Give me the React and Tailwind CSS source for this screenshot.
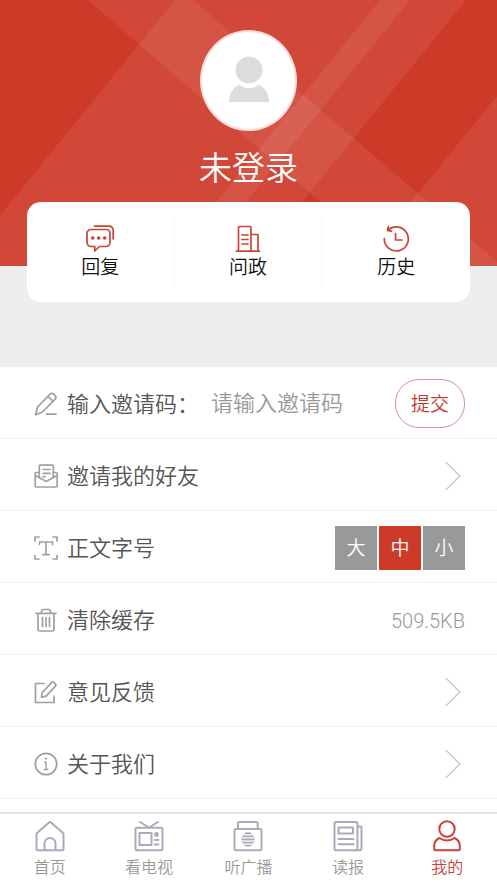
import React, { useState } from "react";

const Icon = ({ className, children, width = 24, height = 24, strokeWidth = 1.7 }) => (
    <svg
        className={className}
        width={width}
        height={height}
        viewBox={`0 0 ${width} ${height}`}
        fill="none"
        stroke="currentColor"
        strokeWidth={strokeWidth}
        strokeLinecap="round"
        strokeLinejoin="round"
        aria-hidden="true"
    >
        {children}
    </svg>
);

/* shortcut icons */
const ReplyIcon = () => (
    <Icon width={28} height={28}>
        <path d="M5 4.500h15a4 4 0 0 1 4 4v9a4 4 0 0 1-4 4h-6.500l-4.700 4.500v-4.500H5a4 4 0 0 1-4-4v-9a4 4 0 0 1 4-4z" />
        <path d="M8.500 1.200h14.700a4 4 0 0 1 4 4V14" />
        <g fill="currentColor" stroke="none">
            <circle cx="6.700" cy="13" r="1.800" />
            <circle cx="12.700" cy="13" r="1.800" />
            <circle cx="18.700" cy="13" r="1.800" />
        </g>
    </Icon>
);

const BuildingIcon = () => (
    <Icon width={28} height={28}>
        <path d="M2.500 26.200h23M4.500 26V2.500a1 1 0 0 1 1-1h10.500a1 1 0 0 1 1 1V26M17 9.500h6.500a.5.500 0 0 1 .5.500v16M8 10h6M8 14.500h6M8 19h6" />
    </Icon>
);

const HistoryIcon = () => (
    <Icon width={28} height={28}>
        <path d="M2.300 13.500a12 12 0 1 0 4-8.500" />
        <path d="M6.300 1.500 5.500 5.500l4 .7" />
        <path d="M13.500 8.500V15H20" />
    </Icon>
);

/* list icons */
const PencilIcon = () => (
    <Icon>
        <path d="M1.500 22.800 3.600 15 16 2.200a2.500 2.500 0 0 1 3.600 0l1.500 1.500a2.500 2.500 0 0 1 0 3.500L8.500 20zM14 4.300l5.200 5M12.500 22.200h9.500" />
    </Icon>
);

const InviteIcon = () => (
    <Icon>
        <path d="M5.300 13.500V2a.8.800 0 0 1 .8-.8h12.400a.8.800 0 0 1 .8.800v11.500M9 5.500h7M9 9.300h7M9 12.700h2" />
        <path d="M5.300 8.500H2.200a1 1 0 0 0-1 1V22a1 1 0 0 0 1 1h20a1 1 0 0 0 1-1V9.500a1 1 0 0 0-1-1h-2.900M1.500 11.500l10.700 6 10.800-6" />
    </Icon>
);

const TextSizeIcon = () => (
    <Icon>
        <path d="M1 5V1h4M19 1h4v4M1 19.500V23h4M19 23h4v-3.500" />
        <path d="M5.500 8.500V6h13v2.500M12 6v12.500M9 18.700h6" />
    </Icon>
);

const TrashIcon = () => (
    <Icon>
        <path d="M2 5.300h20M4 5.500v16A1.500 1.500 0 0 0 5.500 23h13a1.500 1.500 0 0 0 1.500-1.500v-16M7.500 5V3A1.500 1.500 0 0 1 9 1.500h6A1.500 1.500 0 0 1 16.500 3v2M8.500 9.500v9M12 9.500v9M15.500 9.500v9" />
    </Icon>
);

const FeedbackIcon = () => (
    <Icon>
        <path d="M10 3.500H1.500v19H20V16" />
        <path d="m7.500 17.200.7-4.500L18 2.200a1 1 0 0 1 1.400 0l2.300 2.200a1 1 0 0 1 0 1.400L12 16.200z" />
    </Icon>
);

const InfoIcon = () => (
    <Icon>
        <circle cx="12" cy="12" r="10.700" />
        <path d="M10.700 10H12v7.500M10.200 17.500h3.600" strokeWidth="1.400" />
        <circle cx="12" cy="6.700" r="1.100" fill="currentColor" stroke="none" />
    </Icon>
);

const ChevronIcon = () => (
    <svg width="16" height="30" viewBox="0 0 16 30" fill="none" stroke="#ccc" strokeWidth="1.500" aria-hidden="true">
        <path d="m.8 1 14 14-14 14" />
    </svg>
);

/* tab bar icons */
const HomeIcon = () => (
    <Icon width={32} height={32} strokeWidth={2}>
        <path d="M2.500 13.500 15.300 2.300a1 1 0 0 1 1.400 0L29.500 13.500V29a1.200 1.200 0 0 1-1.200 1.200H3.700A1.200 1.200 0 0 1 2.500 29z" />
        <path d="M10.500 30v-6.500a5.500 5.500 0 0 1 11 0V30" />
    </Icon>
);

const TvIcon = () => (
    <Icon width={32} height={32} strokeWidth={2}>
        <path d="m7 2 9 5.500L25 2" />
        <rect x="2.500" y="7.700" width="27" height="22.500" rx="1.500" />
        <rect x="6.500" y="13" width="12" height="12" />
        <circle cx="23.500" cy="14.500" r="2.400" fill="currentColor" stroke="none" />
        <path d="M21.800 20h3.500M21.800 24.500h3.500" />
    </Icon>
);

const RadioIcon = () => (
    <Icon width={32} height={32} strokeWidth={2}>
        <rect x="2.500" y="9" width="27" height="21.200" rx="1.500" />
        <path d="M6 9V3.500A1.500 1.500 0 0 1 7.500 2h16.700a1.500 1.500 0 0 1 1.500 1.500V9" />
        <circle cx="16" cy="19.500" r="7" fill="currentColor" fillOpacity="0.3" stroke="none" />
        <path d="M13.500 13.300h5M11 16.400h10M10 19.500h12M11 22.600h10M13.500 25.700h5" strokeWidth="1.400" />
    </Icon>
);

const NewspaperIcon = () => (
    <Icon width={32} height={32} strokeWidth={2}>
        <rect x="2.500" y="2" width="23" height="28.200" rx="1.500" />
        <path d="M25.500 6.500h3a1 1 0 0 1 1 1v21a1.700 1.700 0 0 1-1.700 1.700H23" />
        <rect x="6.500" y="7.500" width="14.500" height="6" />
        <path d="M6.500 19h15M6.500 24.300h15" />
    </Icon>
);

const UserIcon = () => (
    <Icon width={32} height={32} strokeWidth={2}>
        <circle cx="16" cy="9" r="7.700" />
        <path d="M8.500 18c-3.500 1.500-5.300 4.200-5.300 8v3a1.200 1.200 0 0 0 1.200 1.200h23.200a1.200 1.200 0 0 0 1.200-1.200v-3c0-3.800-1.800-6.500-5.300-8-4.300 3.200-10.700 3.200-15 0z" />
    </Icon>
);

const shortcuts = [
    { label: "回复", icon: ReplyIcon },
    { label: "问政", icon: BuildingIcon },
    { label: "历史", icon: HistoryIcon },
];

const tabs = [
    { label: "首页", icon: HomeIcon },
    { label: "看电视", icon: TvIcon },
    { label: "听广播", icon: RadioIcon },
    { label: "读报", icon: NewspaperIcon },
    { label: "我的", icon: UserIcon, active: true },
];

const rowClass = "flex h-[72px] w-full items-center border-b border-[#f3f3f3] pl-[34px] pr-8 pt-0.5 text-left";

const RowLabel = ({ icon: RowIcon, children }) => (
    <span className="flex shrink-0 items-center gap-[9px] whitespace-nowrap">
        <span className="text-[#a0a0a0]">
            <RowIcon />
        </span>
        <span className="pt-0.5">{children}</span>
    </span>
);

const LinkRow = ({ icon, label }) => (
    <a href="#" className={rowClass}>
        <RowLabel icon={icon}>{label}</RowLabel>
        <span className="ml-auto mr-1">
            <ChevronIcon />
        </span>
    </a>
);

const ProfileHeader = () => (
    <header className="relative bg-[#eee] px-[27px] pb-[65px] pt-[30px]">
        <svg
            className="absolute inset-x-0 top-0 h-[266px] w-full bg-[#ce3a28]"
            viewBox="0 0 497 266"
            preserveAspectRatio="none"
            fill="#fff"
            fillOpacity="0.075"
            aria-hidden="true"
        >
            <path d="M88 0h105l309 266H394z" />
            <path d="M175 0h235L194 266H-41z" />
            <path d="M380 0h86L250 266h-86z" />
            <path d="M497 96v170H359z" />
        </svg>

        <div className="relative flex flex-col items-center">
            <div className="flex h-[101px] w-[97px] items-center justify-center rounded-[50%] border-2 border-[#f9dcd8] bg-white pb-1">
                <svg width="40" height="46" viewBox="0 0 40 46" fill="#dcdcdc" aria-hidden="true">
                    <circle cx="20" cy="14" r="13.500" />
                    <path d="M0 46c.5-8 3.500-14 10-17.500 6 5 14 5 20 0C36.500 32 39.500 38 40 46z" />
                </svg>
            </div>
            <h1 className="mt-3.5 text-[33px] leading-[48px] text-white">未登录</h1>
        </div>

        <nav className="relative mt-[9px] grid h-[100px] grid-cols-3 rounded-[14px] bg-white py-3.5">
            {shortcuts.map(({ label, icon: ShortcutIcon }) => (
                <a
                    key={label}
                    href="#"
                    className="flex flex-col items-center gap-px border-r border-[#f7f7f7] pt-[9px] text-[19px] leading-7 text-[#111] last:border-r-0"
                >
                    <span className="text-[#cb4236]">
                        <ShortcutIcon />
                    </span>
                    {label}
                </a>
            ))}
        </nav>
    </header>
);

const FontSizePicker = () => {
    const [size, setSize] = useState("中");

    return (
        <div className="ml-auto flex gap-0.5">
            {["大", "中", "小"].map((item) => (
                <button
                    key={item}
                    type="button"
                    aria-pressed={size === item}
                    onClick={() => setSize(item)}
                    className={`h-11 w-[42px] pt-0.5 text-[19px] text-white ${size === item ? "bg-[#ce3a28]" : "bg-[#999]"}`}
                >
                    {item}
                </button>
            ))}
        </div>
    );
};

const TabBar = () => (
    <nav className="sticky bottom-0 mt-auto grid h-[71px] grid-cols-5 border-t-2 border-[#e2e2e2] bg-white pt-1.5">
        {tabs.map(({ label, icon: TabIcon, active }) => (
            <a
                key={label}
                href="#"
                aria-current={active ? "page" : undefined}
                className={`flex flex-col items-center gap-1 text-base leading-6 ${active ? "text-[#cb4236]" : "text-[#999]"}`}
            >
                <span className={active ? "text-[#cb4236]" : "text-[#aaaabc]"}>
                    <TabIcon />
                </span>
                {label}
            </a>
        ))}
    </nav>
);

const App = () => {
    return (
        <div className="flex min-h-screen flex-col bg-white font-['Roboto','Noto_Sans_CJK_SC',sans-serif] font-[350]">
            <ProfileHeader />

            <main className="pb-3 text-[22px] leading-8 text-[#555]">
                <form className={rowClass} onSubmit={(e) => e.preventDefault()}>
                    <label htmlFor="invite-code">
                        <RowLabel icon={PencilIcon}>输入邀请码：</RowLabel>
                    </label>
                    <input
                        id="invite-code"
                        type="text"
                        placeholder="请输入邀请码"
                        className="ml-3 min-w-0 flex-1 outline-none placeholder:text-[#999]"
                    />
                    <button
                        type="submit"
                        className="h-[49px] w-[70px] shrink-0 rounded-3xl border border-[#d4948d] pt-0.5 text-[19px] text-[#c23a2c]"
                    >
                        提交
                    </button>
                </form>
                <LinkRow icon={InviteIcon} label="邀请我的好友" />
                <div className={rowClass}>
                    <RowLabel icon={TextSizeIcon}>正文字号</RowLabel>
                    <FontSizePicker />
                </div>
                <button type="button" className={rowClass}>
                    <RowLabel icon={TrashIcon}>清除缓存</RowLabel>
                    <span className="ml-auto pt-0.5 text-[20px] text-[#999]">509.5KB</span>
                </button>
                <LinkRow icon={FeedbackIcon} label="意见反馈" />
                <LinkRow icon={InfoIcon} label="关于我们" />
            </main>

            <TabBar />
        </div>
    );
};

export default App;
